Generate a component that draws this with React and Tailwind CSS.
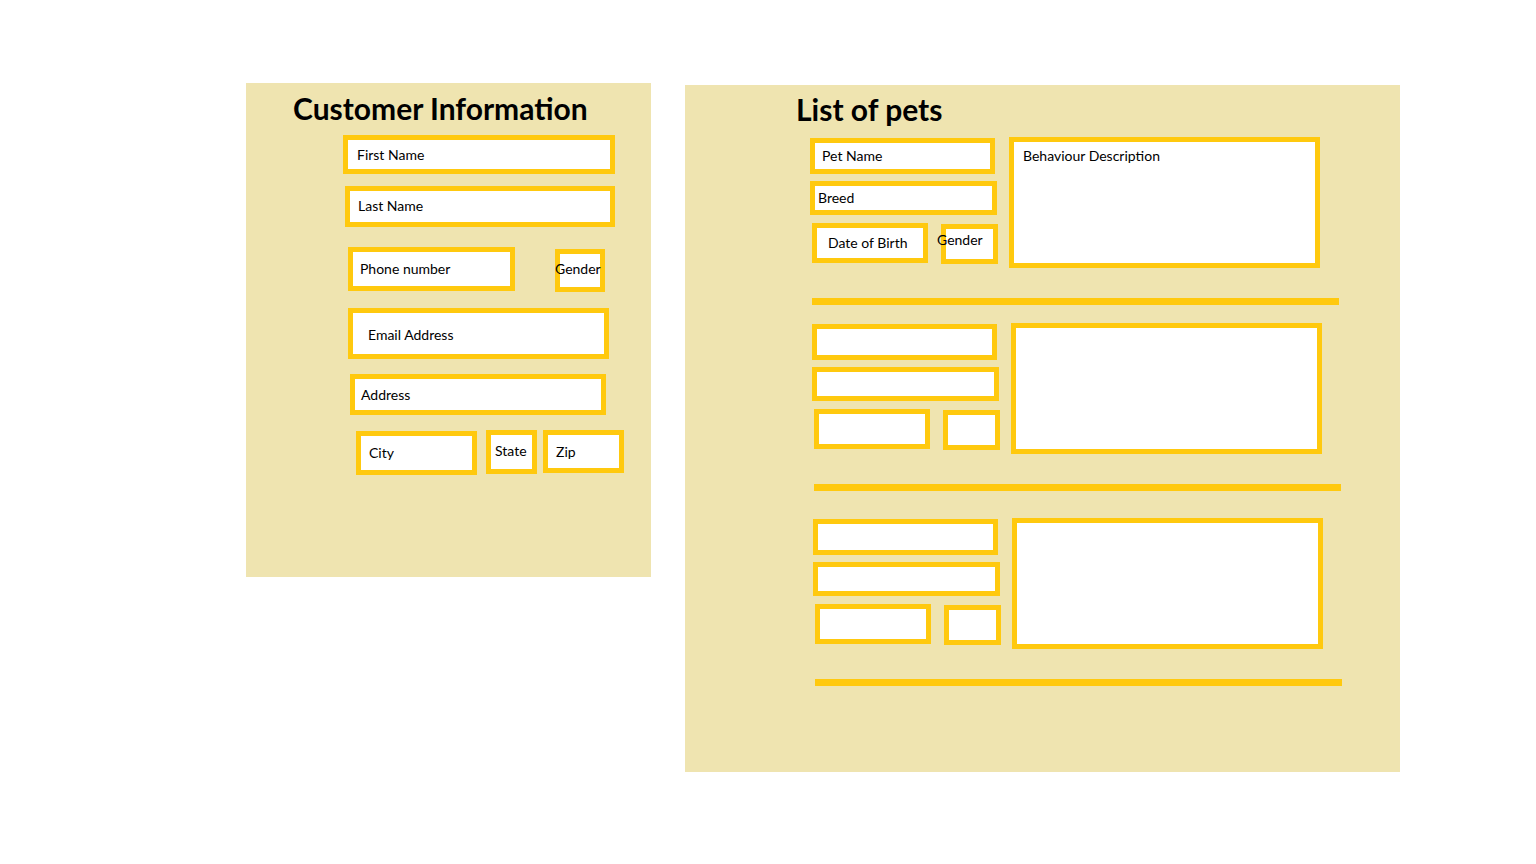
import React from "react";

const FONT = "font-['Lato',sans-serif]";

// one yellow-bordered input box from the sketch
function Field({ className, children, textClass = "" }) {
  return (
    <div className={`shrink-0 flex items-center border-[5px] border-[#FFC90E] bg-white text-[14px] text-black leading-[18px] whitespace-nowrap ${className}`}>
      {children ? <span className={textClass}>{children}</span> : null}
    </div>
  );
}

function PetSection({ className, labels }) {
  return (
    <div className={className}>
      <div className="flex items-start">
        <div className="flex flex-col w-[188px]">
          <Field className="mt-[1px] w-[185px] h-[36px] pl-[7px]">{labels && "Pet Name"}</Field>
          <Field className="mt-[7px] w-[187px] h-[34px] pl-[3px]" textClass="mb-[1px]">{labels && "Breed"}</Field>
          <div className="flex items-start mt-[8px]">
            <Field className="ml-[2px] w-[116px] h-[40px] pl-[11px]">{labels && "Date of Birth"}</Field>
            <Field className="mt-[1px] ml-[13px] w-[57px] h-[40px]" textClass="-ml-[9px] mb-[8px]">
              {labels && "Gender"}
            </Field>
          </div>
        </div>
        {/* behaviour description box */}
        <div className="shrink-0 ml-[11px] w-[311px] h-[131px] border-[5px] border-[#FFC90E] bg-white pl-[9px] pt-[5px] text-[14px] leading-[18px] text-black">
          {labels && "Behaviour Description"}
        </div>
      </div>
      <div className="mt-[30px] ml-[2px] w-[527px] h-[7px] bg-[#FFC90E]" />
    </div>
  );
}

export default function App() {
  return (
    <div className={`min-h-[864px] w-[1536px] bg-white flex items-start pl-[246px] pt-[83px] ${FONT}`}>
      {/* Customer information */}
      <div className="shrink-0 w-[405px] h-[494px] bg-[#EFE4B0] flex flex-col items-start">
        <h1 className="mt-[7px] ml-[47px] text-[30px] leading-[36px] font-bold text-black whitespace-nowrap">
          Customer Information
        </h1>
        <Field className="mt-[9px] ml-[97px] w-[272px] h-[39px] pl-[9px]">First Name</Field>
        <Field className="mt-[12px] ml-[99px] w-[270px] h-[41px] pl-[8px]" textClass="mb-[2px]">Last Name</Field>
        <div className="flex items-start mt-[20px]">
          <Field className="ml-[102px] w-[167px] h-[44px] pl-[7px]">Phone number</Field>
          <Field className="mt-[2px] ml-[40px] w-[50px] h-[43px]" textClass="-ml-[5px] mb-[3px]">Gender</Field>
        </div>
        <Field className="mt-[16px] ml-[102px] w-[261px] h-[51px] pl-[15px]" textClass="mt-[2px]">Email Address</Field>
        <Field className="mt-[15px] ml-[104px] w-[256px] h-[41px] pl-[6px]">Address</Field>
        <div className="flex items-start mt-[15px]">
          <Field className="mt-[1px] ml-[110px] w-[121px] h-[44px] pl-[8px]">City</Field>
          <Field className="ml-[9px] w-[51px] h-[44px] pl-[4px]" textClass="mb-[2px]">State</Field>
          <Field className="ml-[6px] w-[81px] h-[43px] pl-[8px]">Zip</Field>
        </div>
      </div>

      {/* List of pets */}
      <div className="shrink-0 mt-[2px] ml-[34px] w-[715px] h-[687px] bg-[#EFE4B0] flex flex-col items-start">
        <h1 className="mt-[6px] ml-[111px] text-[30px] leading-[36px] font-bold text-black whitespace-nowrap">
          List of pets
        </h1>
        <PetSection className="mt-[10px] ml-[125px]" labels />
        <PetSection className="mt-[18px] ml-[127px]" />
        <PetSection className="mt-[27px] ml-[128px]" />
      </div>
    </div>
  );
}
